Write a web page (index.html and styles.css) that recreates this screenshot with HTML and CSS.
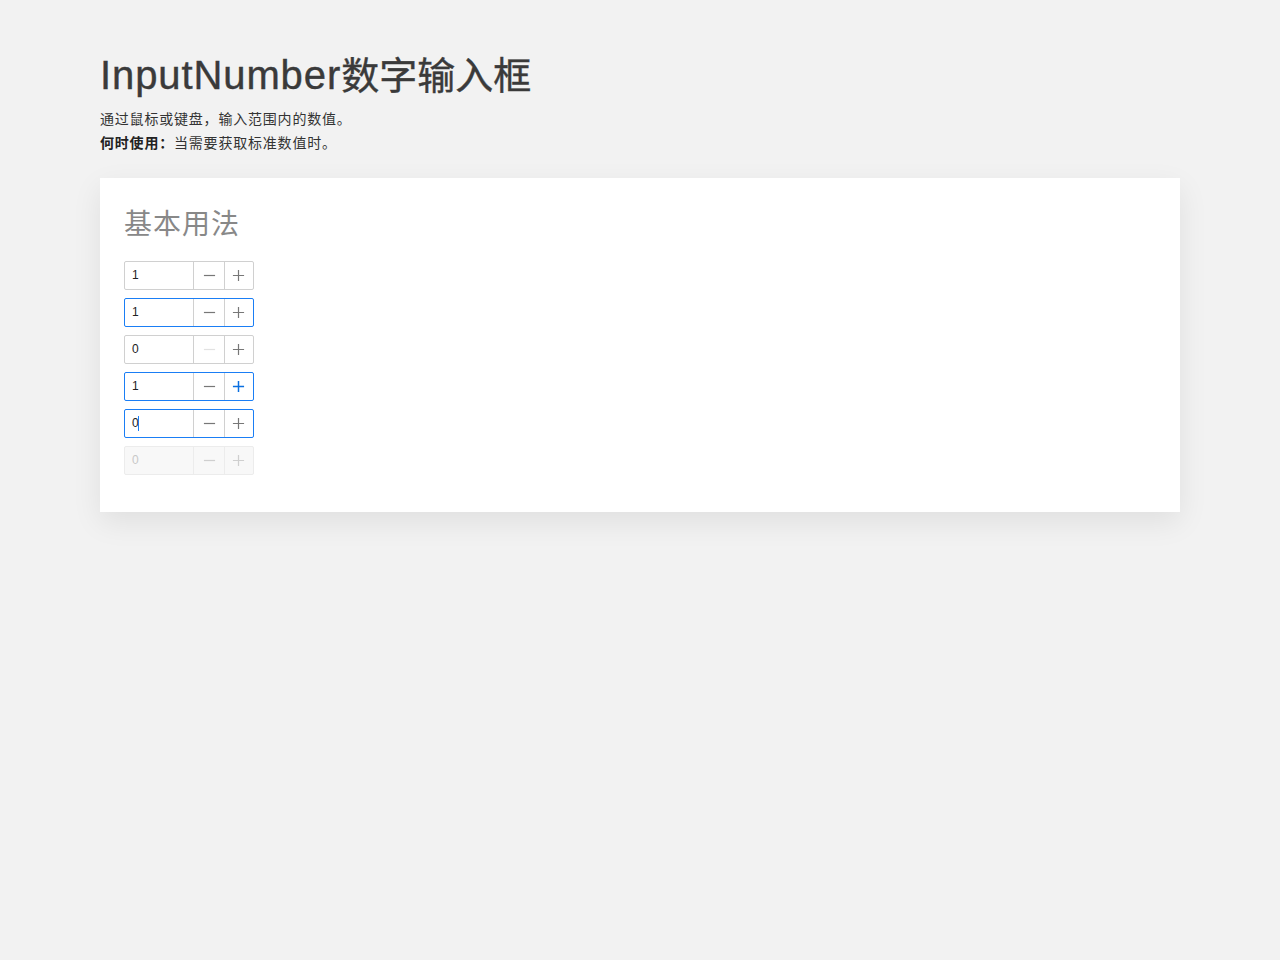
FILE: index.html
```html
<!DOCTYPE html>
<html lang="zh-CN">
<head>
<meta charset="utf-8">
<title>InputNumber数字输入框</title>
<link rel="stylesheet" href="styles.css">
</head>
<body>
<div class="page">
  <h1 class="page-title"><span class="latin">InputNumber</span><span class="cjk">数字输入框</span></h1>
  <p class="desc">通过鼠标或键盘，输入范围内的数值。</p>
  <p class="desc"><strong>何时使用：</strong>当需要获取标准数值时。</p>

  <section class="card">
    <h2 class="card-title">基本用法</h2>
    <div class="list">
      <div class="num">
        <div class="num-value">1</div>
        <div class="num-btn"><svg viewBox="0 0 14 14"><path d="M1 7h12"/></svg></div>
        <div class="num-btn"><svg viewBox="0 0 14 14"><path d="M1 7h12M7 1v12"/></svg></div>
      </div>
      <div class="num focus">
        <div class="num-value">1</div>
        <div class="num-btn"><svg viewBox="0 0 14 14"><path d="M1 7h12"/></svg></div>
        <div class="num-btn"><svg viewBox="0 0 14 14"><path d="M1 7h12M7 1v12"/></svg></div>
      </div>
      <div class="num">
        <div class="num-value">0</div>
        <div class="num-btn off"><svg viewBox="0 0 14 14"><path d="M1 7h12"/></svg></div>
        <div class="num-btn"><svg viewBox="0 0 14 14"><path d="M1 7h12M7 1v12"/></svg></div>
      </div>
      <div class="num focus">
        <div class="num-value">1</div>
        <div class="num-btn"><svg viewBox="0 0 14 14"><path d="M1 7h12"/></svg></div>
        <div class="num-btn active"><svg viewBox="0 0 14 14"><path d="M1 7h12M7 1v12"/></svg></div>
      </div>
      <div class="num focus">
        <div class="num-value">0<span class="caret"></span></div>
        <div class="num-btn"><svg viewBox="0 0 14 14"><path d="M1 7h12"/></svg></div>
        <div class="num-btn"><svg viewBox="0 0 14 14"><path d="M1 7h12M7 1v12"/></svg></div>
      </div>
      <div class="num disabled">
        <div class="num-value">0</div>
        <div class="num-btn"><svg viewBox="0 0 14 14"><path d="M1 7h12"/></svg></div>
        <div class="num-btn"><svg viewBox="0 0 14 14"><path d="M1 7h12M7 1v12"/></svg></div>
      </div>
    </div>
  </section>
</div>
</body>
</html>
```
FILE: styles.css
```css
html, body {
  margin: 0;
  padding: 0;
  background: #f2f2f2;
  font-family: "Liberation Sans", "Noto Sans CJK SC", sans-serif;
  color: #333;
}

.page {
  padding: 51px 100px 40px;
}

.page-title {
  margin: 0 0 8px;
  height: 48px;
  font-size: 40px;
  line-height: 48px;
  font-weight: normal;
  color: #3a3a3a;
  -webkit-text-stroke: 0.4px #3a3a3a;
  white-space: nowrap;
}

.page-title .latin {
  letter-spacing: 0.9px;
}

.page-title .cjk {
  font-size: 38px;
}

.desc {
  margin: 0;
  height: 24px;
  font-size: 14px;
  line-height: 24px;
  letter-spacing: 0.8px;
  color: #333;
}

.desc strong {
  font-weight: bold;
  color: #222;
}

.card {
  margin-top: 23px;
  background: #fff;
  padding: 27px 24px 37px;
  box-shadow: 0 10px 28px rgba(0, 0, 0, 0.08);
}

.card-title {
  margin: 0 0 16px;
  font-size: 28px;
  line-height: 40px;
  letter-spacing: 1px;
  font-weight: normal;
  color: #888;
}

.list {
  display: flex;
  flex-direction: column;
  gap: 8px;
}

.num {
  display: flex;
  width: 130px;
  height: 29px;
  box-sizing: border-box;
  border: 1px solid #d0d0d0;
  border-radius: 2px;
  background: #fff;
}

.num-value {
  width: 70px;
  box-sizing: border-box;
  padding-left: 7px;
  font-size: 12px;
  line-height: 27px;
  color: #222;
  display: flex;
  align-items: center;
}

.num-btn {
  width: 30px;
  border-left: 1px solid #d0d0d0;
  display: flex;
  align-items: center;
  justify-content: center;
}

.num-btn:last-child {
  width: 29px;
}

.num-btn svg {
  width: 13px;
  height: 13px;
  fill: none;
  stroke: #777;
  stroke-width: 1.3;
}

.num-btn.off svg {
  stroke: #e2e2e2;
}

.num-btn.active svg {
  stroke: #0a6fe0;
  stroke-width: 1.6;
}

.num.focus {
  border-color: #1a7ef5;
}

.caret {
  display: inline-block;
  width: 1.5px;
  height: 15px;
  background: #1a7ef5;
  margin-left: -1px;
}

.num.disabled {
  background: #f8f8f8;
  border-color: #ececec;
}

.num.disabled .num-value {
  color: #c8c8c8;
}

.num.disabled .num-btn {
  border-left-color: #ececec;
}

.num.disabled .num-btn svg {
  stroke: #cfcfcf;
}
```
